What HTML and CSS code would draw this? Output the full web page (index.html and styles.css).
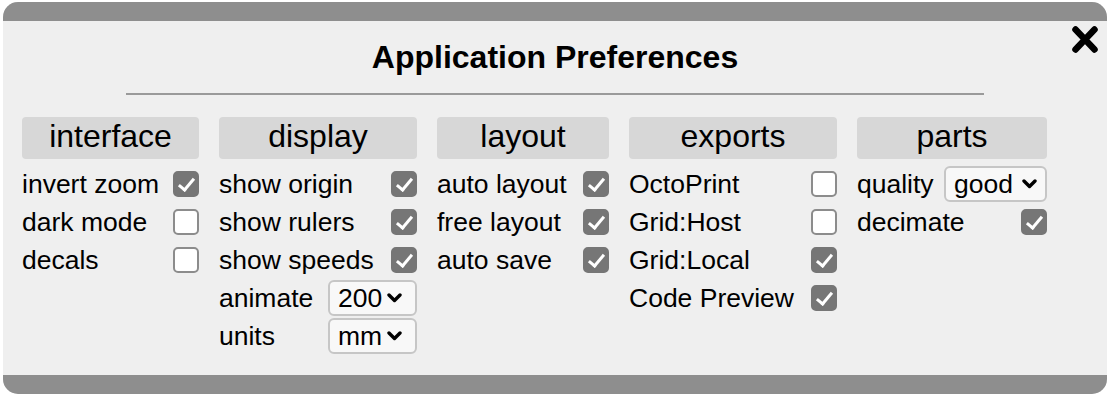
FILE: index.html
```html
<!DOCTYPE html>
<html lang="en">
<head>
  <meta charset="UTF-8">
  <meta name="viewport" content="width=device-width, initial-scale=1.0">
  <title>Application Preferences</title>
  <link rel="stylesheet" href="styles.css">
</head>
<body>
  <div class="dialog">
    <div class="bar"></div>
    <div class="content">
      <button class="close" aria-label="close">
        <svg viewBox="0 0 26 27" width="26" height="27">
          <path d="M3.5 3.5 L22.5 23.5 M22.5 3.5 L3.5 23.5" stroke="#000" stroke-width="6.5" stroke-linecap="round" fill="none"/>
        </svg>
      </button>
      <h1 class="title">Application Preferences</h1>
      <hr class="rule">

      <div class="groups">
        <section class="group">
          <div class="group-head">interface</div>
          <label class="row"><span>invert zoom</span><input type="checkbox" checked></label>
          <label class="row"><span>dark mode</span><input type="checkbox"></label>
          <label class="row"><span>decals</span><input type="checkbox"></label>
        </section>

        <section class="group">
          <div class="group-head">display</div>
          <label class="row"><span>show origin</span><input type="checkbox" checked></label>
          <label class="row"><span>show rulers</span><input type="checkbox" checked></label>
          <label class="row"><span>show speeds</span><input type="checkbox" checked></label>
          <label class="row"><span>animate</span>
            <span class="select sel-num">
              <select><option>200</option><option>100</option><option>50</option></select>
              <svg class="chev" viewBox="0 0 15 10" width="15" height="10"><path d="M2 2 L7.5 7.5 L13 2" stroke="#000" stroke-width="3.4" fill="none" stroke-linecap="round" stroke-linejoin="round"/></svg>
            </span>
          </label>
          <label class="row"><span>units</span>
            <span class="select sel-num">
              <select><option>mm</option><option>in</option></select>
              <svg class="chev" viewBox="0 0 15 10" width="15" height="10"><path d="M2 2 L7.5 7.5 L13 2" stroke="#000" stroke-width="3.4" fill="none" stroke-linecap="round" stroke-linejoin="round"/></svg>
            </span>
          </label>
        </section>

        <section class="group">
          <div class="group-head">layout</div>
          <label class="row"><span>auto layout</span><input type="checkbox" checked></label>
          <label class="row"><span>free layout</span><input type="checkbox" checked></label>
          <label class="row"><span>auto save</span><input type="checkbox" checked></label>
        </section>

        <section class="group">
          <div class="group-head">exports</div>
          <label class="row"><span>OctoPrint</span><input type="checkbox"></label>
          <label class="row"><span>Grid:Host</span><input type="checkbox"></label>
          <label class="row"><span>Grid:Local</span><input type="checkbox" checked></label>
          <label class="row"><span>Code Preview</span><input type="checkbox" checked></label>
        </section>

        <section class="group">
          <div class="group-head">parts</div>
          <label class="row"><span>quality</span>
            <span class="select sel-quality">
              <select><option>good</option><option>better</option><option>best</option></select>
              <svg class="chev" viewBox="0 0 15 10" width="15" height="10"><path d="M2 2 L7.5 7.5 L13 2" stroke="#000" stroke-width="3.4" fill="none" stroke-linecap="round" stroke-linejoin="round"/></svg>
            </span>
          </label>
          <label class="row"><span>decimate</span><input type="checkbox" checked></label>
        </section>
      </div>
    </div>
    <div class="bar"></div>
  </div>
</body>
</html>
```

FILE: styles.css
```css
body {
  margin: 0;
  background-color: #fff;
  font-family: 'Liberation Sans', Arial, sans-serif;
  color: #000;
}

.dialog {
  width: 1104px;
  height: 392px;
  margin: 2px 0 0 3px;
  background-color: #efefef;
  border-radius: 15px;
  overflow: hidden;
  display: flex;
  flex-direction: column;
}

.bar {
  height: 19px;
  background-color: #8e8e8e;
  flex: none;
}

.content {
  position: relative;
  flex: 1;
  padding: 18px 19px 0;
}

.close {
  position: absolute;
  top: 5px;
  right: 9px;
  padding: 0;
  border: none;
  background: none;
  cursor: pointer;
  line-height: 0;
}

.title {
  margin: 0;
  font-size: 32px;
  line-height: 37px;
  font-weight: bold;
  text-align: center;
}

.rule {
  width: 858px;
  height: 2px;
  margin: 17px auto 22px;
  border: none;
  background-color: #9a9a9a;
}

.groups {
  display: grid;
  grid-template-columns: 177px 198px 172px 208px 190px;
  gap: 20px;
  align-items: start;
}

.group {
  display: flex;
  flex-direction: column;
}

.group-head {
  height: 42px;
  line-height: 38px;
  padding-bottom: 4px;
  box-sizing: border-box;
  margin-bottom: 6px;
  background-color: #d7d7d7;
  border-radius: 4px;
  text-align: center;
  font-size: 32px;
}

.row {
  height: 38px;
  display: flex;
  align-items: center;
  justify-content: space-between;
  font-size: 26.5px;
  white-space: nowrap;
}

.row input[type="checkbox"] {
  -webkit-appearance: none;
  appearance: none;
  position: relative;
  width: 26px;
  height: 26px;
  margin: 0;
  border: 2px solid #8c8c8c;
  border-radius: 5px;
  background-color: #fff;
  box-sizing: border-box;
  cursor: pointer;
}

.row input[type="checkbox"]:checked {
  background-color: #767676;
  border-color: #767676;
}

.row input[type="checkbox"]:checked::after {
  content: '';
  position: absolute;
  left: 7px;
  top: 2px;
  width: 6px;
  height: 13px;
  border-right: 3.5px solid #fff;
  border-bottom: 3.5px solid #fff;
  transform: rotate(40deg);
}

.select {
  display: flex;
  align-items: center;
  justify-content: space-between;
  height: 36px;
  box-sizing: border-box;
  padding: 0 13px 0 8px;
  border: 2px solid #c6c6c6;
  border-radius: 6px;
  background-color: #f8f8f8;
}

.select select {
  -webkit-appearance: none;
  appearance: none;
  border: none;
  background: none;
  padding: 0;
  margin: 0;
  font-family: inherit;
  font-size: 26.5px;
  color: #000;
  outline: none;
}

.sel-num {
  width: 89px;
}

.sel-quality {
  width: 103px;
  padding-right: 9px;
}

.chev {
  flex: none;
  pointer-events: none;
}
```
